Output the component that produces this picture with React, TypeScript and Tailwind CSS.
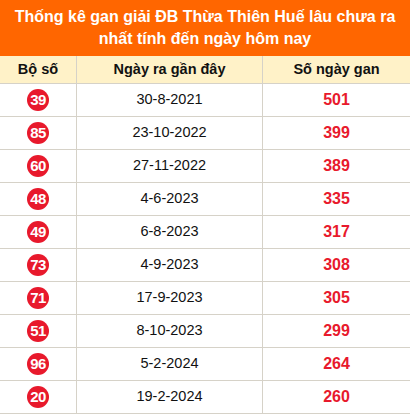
import React from "react";

const rows = [
  ["39", "30-8-2021", "501"],
  ["85", "23-10-2022", "399"],
  ["60", "27-11-2022", "389"],
  ["48", "4-6-2023", "335"],
  ["49", "6-8-2023", "317"],
  ["73", "4-9-2023", "308"],
  ["71", "17-9-2023", "305"],
  ["51", "8-10-2023", "299"],
  ["96", "5-2-2024", "264"],
  ["20", "19-2-2024", "260"],
];

export default function App() {
  return (
    <div className="w-[410px] bg-white" style={{ fontFamily: '"Liberation Sans", Arial, sans-serif' }}>
      <div className="bg-[#ff6600] h-[56px] flex items-center justify-center px-1 text-center text-white font-bold text-[16px] leading-[22px]">
        Thống kê gan giải ĐB Thừa Thiên Huế lâu chưa ra nhất tính đến ngày hôm nay
      </div>
      <div className="grid grid-cols-[77px_186px_147px]">
        <div className="h-[28px] bg-[#fff2c8] border-r border-b border-[#d6d2c8] flex items-center justify-center font-bold text-[14.5px] text-[#111]">Bộ số</div>
        <div className="h-[28px] bg-[#fff2c8] border-r border-b border-[#d6d2c8] flex items-center justify-center font-bold text-[14.5px] text-[#111]">Ngày ra gần đây</div>
        <div className="h-[28px] bg-[#fff2c8] border-b border-[#d6d2c8] flex items-center justify-center font-bold text-[14.5px] text-[#111]">Số ngày gan</div>
        {rows.map(([n, d, g]) => (
          <React.Fragment key={n}>
            <div className="h-[33px] border-r border-b border-[#d6d2c8] flex items-center justify-center">
              <span className="w-[22px] h-[22px] rounded-full bg-[#e8192c] text-white font-bold text-[15px] flex items-center justify-center tracking-[-0.5px]">{n}</span>
            </div>
            <div className="h-[33px] border-r border-b border-[#d6d2c8] flex items-center justify-center text-[14.5px] text-[#111]">{d}</div>
            <div className="h-[33px] border-b border-[#d6d2c8] flex items-center justify-center font-bold text-[16px] text-[#e8192c]">{g}</div>
          </React.Fragment>
        ))}
      </div>
    </div>
  );
}
